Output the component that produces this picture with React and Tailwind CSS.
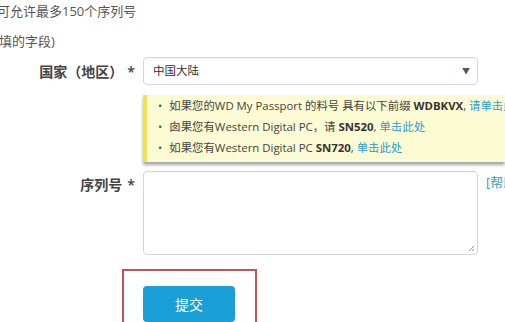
import React from "react";

const font = { fontFamily: '"Open Sans", "Noto Sans CJK SC", sans-serif' };

export default function App() {
  return (
    <div className="w-[505px] h-[322px] overflow-hidden bg-white text-[#555]" style={font}>
      <div className="ml-[-3px] pt-[2px] text-[13px] leading-[18px]">可允许最多150个序列号</div>
      <div className="ml-[-1px] mt-[12px] text-[13px] leading-[18px]">填的字段)</div>

      <div className="mt-[7px] flex">
        <div className="w-[143px] shrink-0 pr-[8px] h-[28px] flex items-center justify-end text-[14px] font-semibold text-[#444]">
          国家（地区）<span className="ml-[4px]">*</span>
        </div>
        <div className="w-[335px] shrink-0 h-[28px] rounded-[4px] border border-[#d6d6d6] shadow-[inset_0_1px_1px_rgba(0,0,0,0.04)] flex items-center justify-between pl-[9px] pr-[7px] text-[11.5px] text-[#333]">
          <span>中国大陆</span>
          <span className="text-[8px] text-[#555]">▼</span>
        </div>
      </div>

      <div className="mt-[10px] ml-[143px] h-[67px] bg-[#fdfbd3] border-l-[4px] border-[#f2e24e] shadow-[0_3px_3px_rgba(0,0,0,0.35)] pl-[11px] pt-[0px] text-[11.4px] leading-[21px] text-[#444] whitespace-nowrap overflow-hidden">
        <div className="flex items-center">
          <span className="mr-[7px] text-[#555]">•</span>
          <span>如果您的WD My Passport 的料号 具有以下前缀 <b className="text-[#333]">WDBKVX</b>, <span className="text-[#2a9ed3]">请单击此处</span></span>
        </div>
        <div className="flex items-center">
          <span className="mr-[7px] text-[#555]">•</span>
          <span>囱果您有Western Digital PC，请 <b className="text-[#333]">SN520</b>, <span className="text-[#2a9ed3]">单击此处</span></span>
        </div>
        <div className="flex items-center">
          <span className="mr-[7px] text-[#555]">•</span>
          <span>如果您有Western Digital PC <b className="text-[#333]">SN720</b>, <span className="text-[#2a9ed3]">单击此处</span></span>
        </div>
      </div>

      <div className="mt-[9px] flex">
        <div className="w-[143px] shrink-0 pr-[8px] pt-[4px] flex justify-end text-[14px] font-semibold text-[#444] leading-[20px]">
          序列号<span className="ml-[5px]">*</span>
        </div>
        <div className="relative w-[335px] shrink-0 h-[84px] rounded-[4px] border border-[#d6d6d6] shadow-[inset_0_1px_1px_rgba(0,0,0,0.04)]">
          <svg className="absolute right-[2px] bottom-[2px]" width="7" height="7" viewBox="0 0 7 7">
            <path d="M6 1 L1 6 M6 4 L4 6" stroke="#999" strokeWidth="1" />
          </svg>
        </div>
        <div className="ml-[8px] pt-[2px] text-[13px] text-[#3a9dcf] whitespace-nowrap">[帮助]</div>
      </div>

      <div className="mt-[14px] ml-[122px] w-[135px] h-[60px] border-2 border-[#c8505c] pl-[19px] pt-[15px]">
        <div className="w-[92px] h-[36px] rounded-[4px] bg-[#1a9fd9] flex items-center justify-center text-white text-[14px]">
          提交
        </div>
      </div>
    </div>
  );
}
